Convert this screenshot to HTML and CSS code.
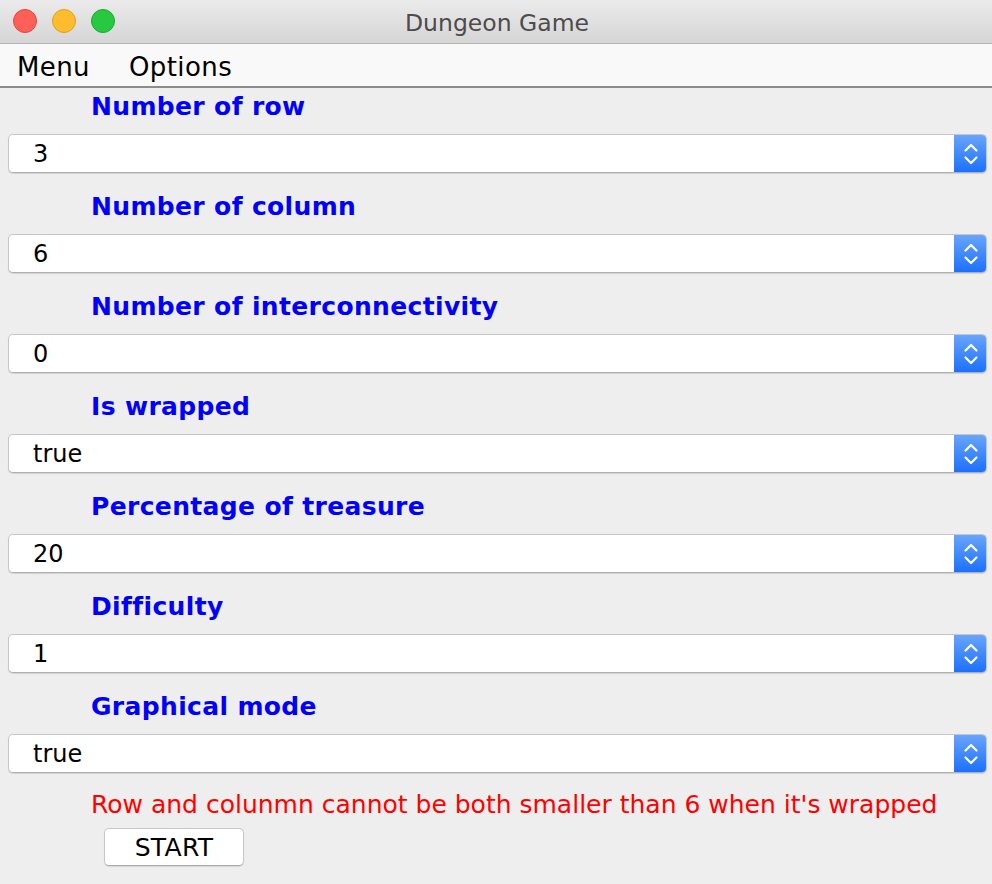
FILE: index.html
```html
<!DOCTYPE html>
<html>
<head>
<meta charset="utf-8">
<link rel="stylesheet" href="styles.css">
</head>
<body>
<div class="window">
  <div class="titlebar">
    <div class="lights">
      <span class="light red"></span>
      <span class="light yellow"></span>
      <span class="light green"></span>
    </div>
    <div class="title">Dungeon Game</div>
  </div>
  <div class="menubar">
    <span class="menu-item">Menu</span>
    <span class="menu-item">Options</span>
  </div>
  <div class="content">
    <div class="field">
      <div class="label">Number of row</div>
      <div class="combo"><span class="value">3</span><span class="arrow"><svg width="16" height="26" viewBox="0 0 16 26"><path d="M2.5 9.5 L8 4 L13.5 9.5 M2.5 16.5 L8 22 L13.5 16.5" fill="none" stroke="#fff" stroke-width="2.2" stroke-linecap="round" stroke-linejoin="round"/></svg></span></div>
    </div>
    <div class="field">
      <div class="label">Number of column</div>
      <div class="combo"><span class="value">6</span><span class="arrow"><svg width="16" height="26" viewBox="0 0 16 26"><path d="M2.5 9.5 L8 4 L13.5 9.5 M2.5 16.5 L8 22 L13.5 16.5" fill="none" stroke="#fff" stroke-width="2.2" stroke-linecap="round" stroke-linejoin="round"/></svg></span></div>
    </div>
    <div class="field">
      <div class="label">Number of interconnectivity</div>
      <div class="combo"><span class="value">0</span><span class="arrow"><svg width="16" height="26" viewBox="0 0 16 26"><path d="M2.5 9.5 L8 4 L13.5 9.5 M2.5 16.5 L8 22 L13.5 16.5" fill="none" stroke="#fff" stroke-width="2.2" stroke-linecap="round" stroke-linejoin="round"/></svg></span></div>
    </div>
    <div class="field">
      <div class="label">Is wrapped</div>
      <div class="combo"><span class="value">true</span><span class="arrow"><svg width="16" height="26" viewBox="0 0 16 26"><path d="M2.5 9.5 L8 4 L13.5 9.5 M2.5 16.5 L8 22 L13.5 16.5" fill="none" stroke="#fff" stroke-width="2.2" stroke-linecap="round" stroke-linejoin="round"/></svg></span></div>
    </div>
    <div class="field">
      <div class="label">Percentage of treasure</div>
      <div class="combo"><span class="value">20</span><span class="arrow"><svg width="16" height="26" viewBox="0 0 16 26"><path d="M2.5 9.5 L8 4 L13.5 9.5 M2.5 16.5 L8 22 L13.5 16.5" fill="none" stroke="#fff" stroke-width="2.2" stroke-linecap="round" stroke-linejoin="round"/></svg></span></div>
    </div>
    <div class="field">
      <div class="label">Difficulty</div>
      <div class="combo"><span class="value">1</span><span class="arrow"><svg width="16" height="26" viewBox="0 0 16 26"><path d="M2.5 9.5 L8 4 L13.5 9.5 M2.5 16.5 L8 22 L13.5 16.5" fill="none" stroke="#fff" stroke-width="2.2" stroke-linecap="round" stroke-linejoin="round"/></svg></span></div>
    </div>
    <div class="field">
      <div class="label">Graphical mode</div>
      <div class="combo"><span class="value">true</span><span class="arrow"><svg width="16" height="26" viewBox="0 0 16 26"><path d="M2.5 9.5 L8 4 L13.5 9.5 M2.5 16.5 L8 22 L13.5 16.5" fill="none" stroke="#fff" stroke-width="2.2" stroke-linecap="round" stroke-linejoin="round"/></svg></span></div>
    </div>
    <div class="error">Row and colunmn cannot be both smaller than 6 when it's wrapped</div>
    <button class="start">START</button>
  </div>
</div>
</body>
</html>
```
FILE: styles.css
```css
html, body {
  margin: 0;
  padding: 0;
}
body {
  background: #eeeeee;
  font-family: "DejaVu Sans", "Liberation Sans", sans-serif;
}
.window {
  width: 992px;
  height: 884px;
  display: flex;
  flex-direction: column;
  background: #eeeeee;
}
.titlebar {
  height: 43px;
  flex: none;
  position: relative;
  background: linear-gradient(#ebebeb, #d5d5d5);
  border-bottom: 1px solid #b4b4b4;
  display: flex;
  align-items: center;
  justify-content: center;
}
.lights {
  position: absolute;
  left: 13px;
  top: 9px;
  display: flex;
  gap: 15px;
}
.light {
  width: 24px;
  height: 24px;
  border-radius: 50%;
  box-sizing: border-box;
}
.red { background: #fe5f57; border: 1px solid #e2463f; }
.yellow { background: #febc2e; border: 1px solid #e1a116; }
.green { background: #28c840; border: 1px solid #14ae2a; }
.title {
  font-size: 23.5px;
  color: #4c4c4c;
  padding-top: 2px;
  padding-left: 2px;
}
.menubar {
  height: 44px;
  flex: none;
  box-sizing: border-box;
  padding-top: 3px;
  background: #f9f9f9;
  border-bottom: 2px solid #8c8c8c;
  display: flex;
  align-items: center;
  padding-left: 17px;
  gap: 39px;
  font-size: 26px;
  letter-spacing: 0.4px;
  color: #000;
}
.content {
  display: flex;
  flex-direction: column;
}
.field {
  display: flex;
  flex-direction: column;
  margin-bottom: 15px;
}
.label {
  height: 36px;
  line-height: 36px;
  padding-top: 1px;
  box-sizing: border-box;
  padding-left: 91px;
  font-size: 25px;
  letter-spacing: 0.35px;
  font-weight: bold;
  color: #0000ff;
  margin-bottom: 10px;
}
.combo {
  height: 39px;
  margin: 0 5px 0 8px;
  box-sizing: border-box;
  background: #fff;
  border: 1px solid #c6c6c6;
  border-bottom-color: #b0b0b0;
  border-radius: 5px;
  box-shadow: 0 1px 1px rgba(0, 0, 0, 0.12);
  display: flex;
  align-items: center;
  overflow: hidden;
}
.value {
  flex: 1;
  padding-left: 24px;
  padding-top: 1px;
  font-size: 24px;
  color: #000;
}
.arrow {
  width: 33px;
  height: 39px;
  margin: -1px -1px -1px 0;
  background: linear-gradient(#6aa6fb, #1a6ffd);
  border-radius: 0 5px 5px 0;
  display: flex;
  align-items: center;
  justify-content: center;
}
.error {
  margin-top: -2px;
  height: 36px;
  line-height: 36px;
  padding-top: 1px;
  box-sizing: border-box;
  padding-left: 91px;
  font-size: 25px;
  color: #ff0000;
}
.start {
  margin: 6px 0 0 104px;
  width: 140px;
  height: 38px;
  background: #fff;
  border: 1px solid #c8c8c8;
  border-bottom-color: #aaaaaa;
  border-radius: 5px;
  box-shadow: 0 1px 1px rgba(0, 0, 0, 0.1);
  font-family: "DejaVu Sans", "Liberation Sans", sans-serif;
  font-size: 25px;
  letter-spacing: 0.3px;
  color: #000;
  padding: 1px 0 0 0;
}
```
